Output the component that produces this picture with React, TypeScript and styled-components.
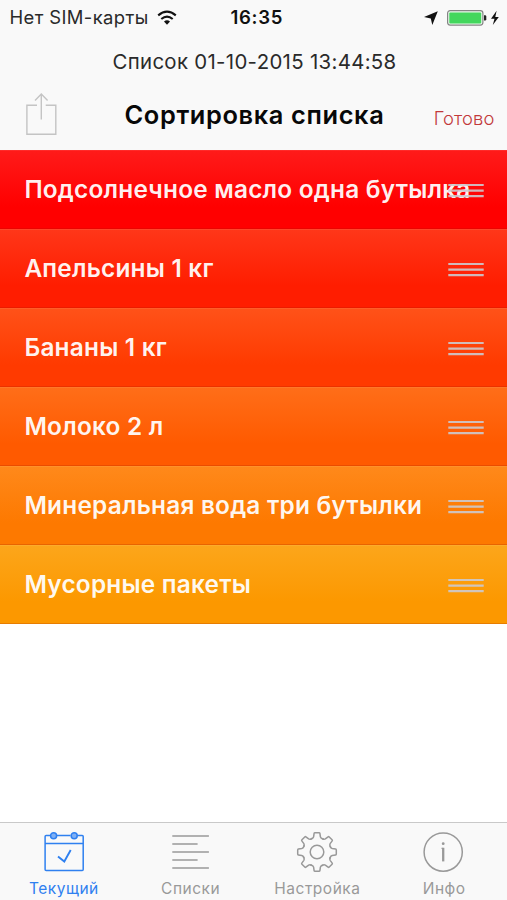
import React from 'react';
import styled, { createGlobalStyle } from 'styled-components';

const GlobalStyle = createGlobalStyle`
  * { box-sizing: border-box; }
  body { margin: 0; background: #fff; font-family: Inter, "Noto Sans", sans-serif; }
`;

const Screen = styled.div`
  display: flex;
  flex-direction: column;
  height: 900px;
  overflow: hidden;
  background: #fff;
`;

const Header = styled.header`
  height: 149.5px;
  flex: none;
  background: #f9f9f9;
`;

const StatusBar = styled.div`
  display: grid;
  grid-template-columns: 1fr auto 1fr;
  align-items: center;
  height: 35px;
  padding: 0 7px 0 9.5px;
  font-size: 18.4px;
  line-height: 35px;
  color: #2a2a2a;
`;

const Carrier = styled.div`
  display: flex;
  align-items: center;
  gap: 8px;
  letter-spacing: 0.4px;
  white-space: nowrap;
`;

const Clock = styled.div`
  font-size: 18.6px;
  font-weight: 600;
  letter-spacing: 0.7px;
  color: #111;
  margin-left: 4px;
`;

const StatusIcons = styled.div`
  display: flex;
  justify-content: flex-end;
  align-items: center;
`;

const ListName = styled.div`
  height: 52px;
  line-height: 53px;
  text-align: center;
  font-size: 20.4px;
  letter-spacing: 0.32px;
  color: #2a2a2a;
  padding-left: 2px;
`;

const NavBar = styled.div`
  display: grid;
  grid-template-columns: 100px 1fr 100px;
  height: 56px;
  align-items: center;
  padding: 0 14px 0 24.5px;
`;

const Title = styled.h1`
  margin: 0;
  padding: 0 10px 0 0;
  text-align: center;
  font-size: 25.4px;
  line-height: 30px;
  font-weight: 600;
  letter-spacing: 0.63px;
  color: #080808;
  white-space: nowrap;
`;

const DoneButton = styled.button`
  border: 0;
  padding: 5px 0 0;
  background: none;
  font: 300 18.4px/24px Inter, sans-serif;
  letter-spacing: 0.1px;
  color: #c2393b;
  text-align: right;
`;

const List = styled.ul`
  list-style: none;
  margin: 0;
  padding: 0;
  flex: 1;
`;

const Row = styled.li<{ $top: string; $bottom: string }>`
  position: relative;
  height: 79.15px;
  padding: 0 0 0 24.4px;
  line-height: 79px;
  font-size: 24.4px;
  font-weight: 600;
  letter-spacing: 0.22px;
  white-space: nowrap;
  color: rgba(255, 255, 255, 0.94);
  background: linear-gradient(${p => p.$top}, ${p => p.$bottom} 72%);
  box-shadow: inset 0 -1px rgba(150, 20, 0, 0.2), inset 0 1px rgba(255, 255, 255, 0.07);
`;

const HandleIcon = styled.svg`
  position: absolute;
  right: 23px;
  top: 33px;
  width: 36px;
  height: 15px;
  stroke: rgba(204, 202, 206, 0.9);
  stroke-width: 2.2;
`;

const TabBar = styled.nav`
  display: grid;
  grid-template-columns: repeat(4, 1fr);
  height: 78px;
  flex: none;
  border-top: 1px solid #c9c9c9;
  background: #f9f9f9;
`;

const Tab = styled.a<{ $active?: boolean }>`
  display: flex;
  flex-direction: column;
  align-items: center;
  padding-top: 8px;
  padding-left: 1px;
  color: ${p => (p.$active ? '#2f80f0' : '#999')};
`;

const TabLabel = styled.span`
  margin-top: 6px;
  font-size: 15.5px;
  line-height: 20px;
  letter-spacing: 0.5px;
`;

const WifiIcon = () => (
  <svg width="20" height="16" viewBox="0 0 20 16" fill="none" stroke="#111" strokeWidth="2.1">
    <path d="M1.2 5.4Q10-2 18.8 5.4" />
    <path d="M4.3 9Q10 4.3 15.7 9" />
    <path d="M10 14.8l-3-3.3q3-2.3 6 0z" fill="#111" stroke="none" />
  </svg>
);

const PowerIcons = () => (
  <svg width="77" height="18" viewBox="0 0 77 18">
    <path d="M14.8 2.2L9.3 16.1 7.8 9.6 1 8.1z" fill="#111" />
    <rect x="24.6" y="1.7" width="35.3" height="14.4" rx="2.5" fill="#e8f8ea" stroke="#858585" strokeWidth="1.2" />
    <rect x="26.3" y="3.4" width="31.9" height="11" rx="1" fill="#43d75d" />
    <path d="M61 6.2h1q1.3 0 1.3 1.3v2.8q0 1.3-1.3 1.3h-1z" fill="#222" />
    <path d="M73.6 1.7L68 9.8h3.5L69.8 16l6-8.1h-3.5z" fill="#111" />
  </svg>
);

const ShareIcon = () => (
  <svg width="32" height="44" viewBox="0 0 32 44" fill="none" stroke="#c4c4c4" strokeWidth="1.4">
    <path d="M12 12.3H1.9v28.9h28.9V12.3H20.7M16.3 26.5V1M10 7.4L16.3 1l6.3 6.4" />
  </svg>
);

const CalendarIcon = () => (
  <svg width="42" height="42" viewBox="0 0 42 42" fill="none" stroke="currentColor" strokeWidth="1.5">
    <path d="M7.5 4.6H3.1q-1 0-1 1v32.8q0 1 1 1h36.1q1 0 1-1V5.6q0-1-1-1h-5M13.5 4.6h14M2.1 12.6h38.1" />
    <circle cx="10.6" cy="4.7" r="3" fill="#7fb0f5" />
    <circle cx="31.2" cy="4.7" r="3" fill="#7fb0f5" />
    <path d="M15 25.5l6.3 5L27.7 19" strokeWidth="1.9" />
  </svg>
);

const LinesIcon = () => (
  <svg width="42" height="42" viewBox="0 0 42 42" stroke="currentColor" strokeWidth="1.6">
    <path d="M2.3 5h36.6M2.3 13h25.3M2.3 21h36.6M2.3 29h25.3M2.3 37h36.6" />
  </svg>
);

const tooth = 'M-5.5-13.2Q-3.7-13.8-3.4-15.2L-2.9-18.6Q-2.8-19.3-2-19.3H2Q2.8-19.3 2.9-18.6L3.4-15.2Q3.7-13.8 5.5-13.2Q6.2-13 6.2-13';

const GearIcon = () => (
  <svg width="42" height="42" viewBox="-21 -21 42 42" fill="none" stroke="currentColor" strokeWidth="1.5" strokeLinecap="round">
    {Array.from({ length: 8 }, (_, i) => (
      <path key={i} d={tooth} transform={`rotate(${i * 45})`} />
    ))}
    <circle r="6.8" />
  </svg>
);

const InfoIcon = () => (
  <svg width="42" height="42" viewBox="0 0 42 42" fill="none" stroke="currentColor" strokeWidth="1.5">
    <circle cx="20.2" cy="21.1" r="19.1" />
    <path d="M20.2 16.8v13.6" strokeWidth="2.3" />
    <path d="M18.4 17.3h2" strokeWidth="1" />
    <circle cx="20.2" cy="12.7" r="1.4" fill="currentColor" stroke="none" />
  </svg>
);

const items = [
  { name: 'Подсолнечное масло одна бутылка', top: '#ff1b1a', bottom: '#ff0000' },
  { name: 'Апельсины 1 кг', top: '#ff3719', bottom: '#ff1d00' },
  { name: 'Бананы 1 кг', top: '#ff5219', bottom: '#ff3a00' },
  { name: 'Молоко 2 л', top: '#ff6e19', bottom: '#ff5a00' },
  { name: 'Минеральная вода три бутылки', top: '#ff891b', bottom: '#fd7900' },
  { name: 'Мусорные пакеты', top: '#fca61b', bottom: '#fc9800' },
];

const tabs = [
  { label: 'Текущий', Icon: CalendarIcon, active: true },
  { label: 'Списки', Icon: LinesIcon },
  { label: 'Настройка', Icon: GearIcon },
  { label: 'Инфо', Icon: InfoIcon },
];

export default function App() {
  return (
    <Screen>
      <GlobalStyle />
      <Header>
        <StatusBar>
          <Carrier>Нет SIM-карты <WifiIcon /></Carrier>
          <Clock>16:35</Clock>
          <StatusIcons><PowerIcons /></StatusIcons>
        </StatusBar>
        <ListName>Список 01-10-2015 13:44:58</ListName>
        <NavBar>
          <ShareIcon />
          <Title>Сортировка списка</Title>
          <DoneButton>Готово</DoneButton>
        </NavBar>
      </Header>
      <List>
        {items.map(item => (
          <Row key={item.name} $top={item.top} $bottom={item.bottom}>
            {item.name}
            <HandleIcon viewBox="0 0 36 15">
              <path d="M.3 2h35.4M.3 7.6h35.4M.3 13.2h35.4" />
            </HandleIcon>
          </Row>
        ))}
      </List>
      <TabBar>
        {tabs.map(({ label, Icon, active }) => (
          <Tab key={label} $active={active}>
            <Icon />
            <TabLabel>{label}</TabLabel>
          </Tab>
        ))}
      </TabBar>
    </Screen>
  );
}
